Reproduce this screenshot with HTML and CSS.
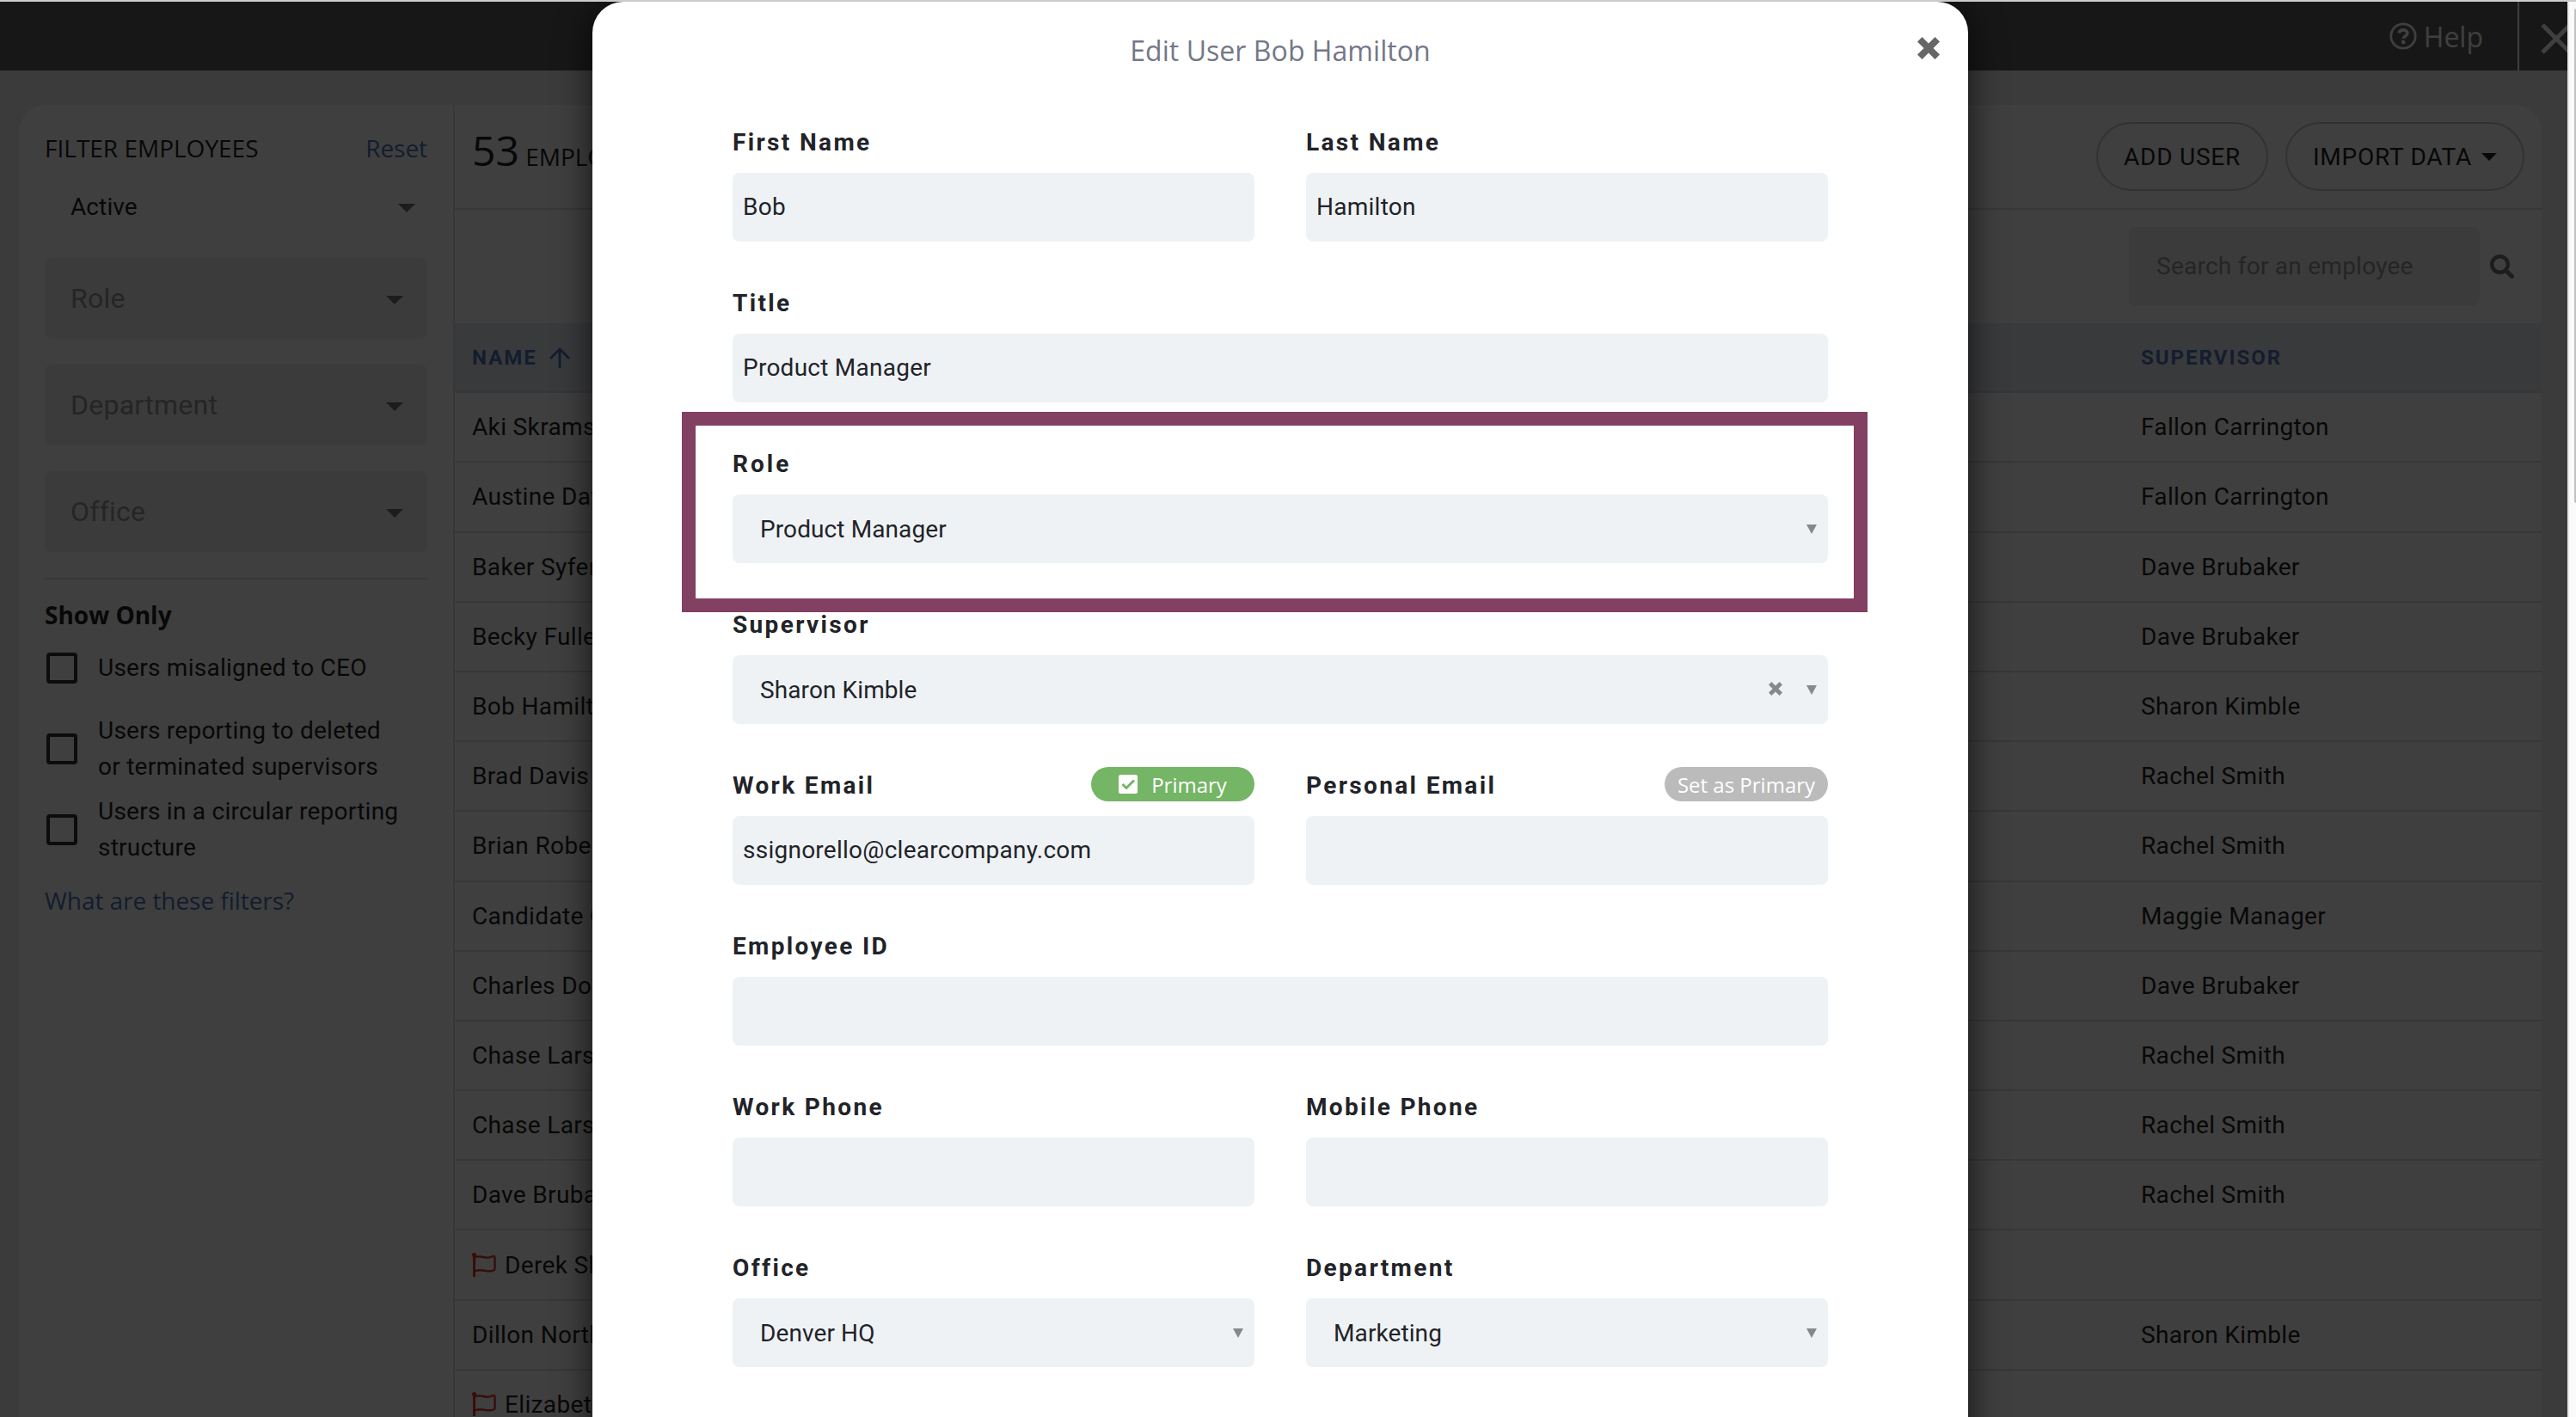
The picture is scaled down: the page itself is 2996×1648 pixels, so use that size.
FILE: index.html
```html
<!DOCTYPE html>
<html lang="en">
<head>
  <meta charset="UTF-8">
  <meta name="viewport" content="width=device-width, initial-scale=1.0">
  <link rel="stylesheet" href="styles.css">
  <title>Edit User</title>
</head>

<body>
  <div class="window">
    <div class="app">
      <header class="topbar">
        <a class="help">
          <svg width="32" height="32" viewBox="0 0 32 32" fill="none" stroke="currentColor">
            <circle cx="16" cy="16" r="14.2" stroke-width="2.8"/>
            <path d="M11 12.3c.8-2.3 2.6-3.4 5-3.4 2.9 0 4.9 1.6 4.9 3.9 0 3.2-4.6 3.3-4.6 6.2" stroke-width="3.6"/>
            <circle cx="16.2" cy="23" r="1.2" stroke-width="2.4"/>
          </svg>
          <span>Help</span>
        </a>
        <div class="topbar-close">
          <svg width="36" height="36" viewBox="0 0 36 36" stroke="currentColor" stroke-width="5">
            <path d="M2 2l32 32M34 2L2 34"/>
          </svg>
        </div>
      </header>

      <div class="card">
        <aside class="sidebar">
          <div class="filter-head">
            <span>FILTER EMPLOYEES</span>
            <a class="link">Reset</a>
          </div>
          <div class="status"><span>Active</span><i class="caret"></i></div>
          <div class="filter"><span>Role</span><i class="caret"></i></div>
          <div class="filter"><span>Department</span><i class="caret"></i></div>
          <div class="filter"><span>Office</span><i class="caret"></i></div>
          <hr>
          <h4>Show Only</h4>
          <label class="check"><i class="box"></i><span>Users misaligned to CEO</span></label>
          <label class="check"><i class="box"></i><span>Users reporting to deleted<br>or terminated supervisors</span></label>
          <label class="check"><i class="box"></i><span>Users in a circular reporting<br>structure</span></label>
          <a class="link what">What are these filters?</a>
        </aside>

        <main class="main">
          <div class="main-head">
            <h2><b>53</b> EMPLOYEES</h2>
            <div class="buttons">
              <button class="btn">ADD USER</button>
              <button class="btn">IMPORT DATA <i class="caret"></i></button>
            </div>
          </div>
          <div class="search-row">
            <div class="search">Search for an employee</div>
            <svg class="search-icon" width="28" height="28" viewBox="0 0 28 28" fill="none" stroke="currentColor" stroke-linecap="round">
              <circle cx="11.5" cy="11.5" r="9.3" stroke-width="4.4"/>
              <path d="M19 19l6.4 6.4" stroke-width="5"/>
            </svg>
          </div>
          <div class="row row-head">
            <span class="name">NAME
              <svg width="24" height="24" viewBox="0 0 24 24" fill="none" stroke="currentColor" stroke-width="2.8"><path d="M12 24V2M1 13L12 2l11 11"/></svg>
            </span>
            <span>SUPERVISOR</span>
          </div>
          <div id="rows"></div>
        </main>
      </div>

      <div class="backdrop"></div>

      <div class="modal">
        <div class="modal-head">
          <h3>Edit User Bob Hamilton</h3>
          <svg class="modal-close" width="26" height="26" viewBox="0 0 26 26"><path d="M5.5 0L13 7.5 20.500 0 26 5.500 18.500 13 26 20.500 20.500 26 13 18.500 5.500 26 0 20.500 7.500 13 0 5.500z"/></svg>
        </div>
        <form class="form">
          <div class="field"><label>First Name</label><div class="input">Bob</div></div>
          <div class="field"><label>Last Name</label><div class="input">Hamilton</div></div>
          <div class="field wide"><label>Title</label><div class="input">Product Manager</div></div>
          <div class="field wide role"><label>Role</label><div class="input select"><span>Product Manager</span><i class="arrow"></i></div></div>
          <div class="field wide"><label>Supervisor</label>
            <div class="input select"><span>Sharon Kimble</span>
              <svg class="clear" width="16" height="16" viewBox="0 0 26 26"><path d="M5.500 0L13 7.500 20.500 0 26 5.500 18.500 13 26 20.500 20.500 26 13 18.500 5.500 26 0 20.500 7.500 13 0 5.500z"/></svg>
              <i class="arrow"></i>
            </div>
          </div>
          <div class="field">
            <label>Work Email
              <span class="pill green">
                <svg width="22" height="22" viewBox="0 0 22 22"><rect width="22" height="22" rx="2.500" fill="#fff"/><path d="M4.500 11l4.500 4.500 9-9" fill="none" stroke="#74b566" stroke-width="3"/></svg>
                Primary</span>
            </label>
            <div class="input">ssignorello@clearcompany.com</div>
          </div>
          <div class="field"><label>Personal Email <span class="pill">Set as Primary</span></label><div class="input"></div></div>
          <div class="field wide"><label>Employee ID</label><div class="input"></div></div>
          <div class="field"><label>Work Phone</label><div class="input"></div></div>
          <div class="field"><label>Mobile Phone</label><div class="input"></div></div>
          <div class="field"><label>Office</label><div class="input select"><span>Denver HQ</span><i class="arrow"></i></div></div>
          <div class="field"><label>Department</label><div class="input select"><span>Marketing</span><i class="arrow"></i></div></div>
        </form>
        <div class="highlight"></div>
      </div>
    </div>
    <div class="scrollbar"><div class="thumb"></div></div>
  </div>

  <script>
    const employees = [
      ['Aki Skramstad', 'Fallon Carrington'],
      ['Austine Davis', 'Fallon Carrington'],
      ['Baker Syfert', 'Dave Brubaker'],
      ['Becky Fuller', 'Dave Brubaker'],
      ['Bob Hamilton', 'Sharon Kimble'],
      ['Brad Davis', 'Rachel Smith'],
      ['Brian Roberts', 'Rachel Smith'],
      ['Candidate C', 'Maggie Manager'],
      ['Charles Dodd', 'Dave Brubaker'],
      ['Chase Larson', 'Rachel Smith'],
      ['Chase Larson', 'Rachel Smith'],
      ['Dave Brubaker', 'Rachel Smith'],
      ['Derek Sh', '', true],
      ['Dillon North', 'Sharon Kimble'],
      ['Elizabeth', '', true]
    ];
    // red flag shown for users without a supervisor
    const flag = '<svg class="flag" width="28" height="28" viewBox="0 0 28 28" fill="none" stroke="currentColor" stroke-width="2.4"><path d="M2.500 2v26" stroke-width="3"/><circle cx="2.500" cy="2.500" r="1.300"/><path d="M3 5.500c8-4 12 3 20 -1q3.500-1.500 3.500 1v13q0 1.500-1.500 2c-8 3-13-3-22 1"/></svg>';
    const rows = document.getElementById('rows');

    employees.forEach(([name, supervisor, flagged]) => {
      const row = document.createElement('div');
      row.className = 'row';
      row.innerHTML = `<span class="name">${flagged ? flag : ''}${name}</span><span>${supervisor}</span>`;
      rows.appendChild(row);
    });
  </script>
</body>

</html>
```
FILE: styles.css
```css
* {
  box-sizing: border-box;
}

body {
  margin: 0;
  overflow: hidden;
  font-family: Roboto, sans-serif;
  font-size: 28px;
  letter-spacing: 0.25px;
  color: #222;
}

svg {
  display: block;
  flex: none;
}

.window {
  display: flex;
  height: 1648px;
  border-top: 2px solid #ccc;
}

.app {
  position: relative;
  display: flex;
  flex-direction: column;
  width: 2986px;
  overflow: hidden;
  background: #ececec;
}

.topbar {
  display: flex;
  flex: none;
  justify-content: flex-end;
  height: 80px;
  background: #5c5c5c;
  color: #fff;
}

.help {
  display: flex;
  align-items: center;
  gap: 8px;
  padding-right: 40px;
  font: 32px "Open Sans", sans-serif;
  letter-spacing: 0;
}

.topbar-close {
  display: flex;
  align-items: center;
  width: 58px;
  padding: 6px 0 0 25px;
  border-left: 2px solid #fff;
  overflow: hidden;
}

.card {
  display: flex;
  flex: none;
  height: 1700px;
  margin: 40px 30px 0 22px;
  background: #fff;
  border-radius: 32px;
  overflow: hidden;
}

/* sidebar */

.sidebar {
  flex: none;
  width: 507px;
  padding: 30px 30px 0;
  border-right: 2px solid #dcdcdc;
}

.filter-head {
  display: flex;
  justify-content: space-between;
  font-family: "Open Sans", sans-serif;
  line-height: 40px;
  letter-spacing: 0;
}

.link {
  font-family: "Open Sans", sans-serif;
  letter-spacing: -0.05px;
  color: #4f76b8;
}

.status,
.filter {
  display: flex;
  align-items: center;
  justify-content: space-between;
  padding: 0 28px 0 30px;
}

.status {
  height: 60px;
  margin: 18px 0 30px;
  padding-right: 14px;
  letter-spacing: 0.1px;
}

.filter {
  height: 94px;
  margin-bottom: 30px;
  border-radius: 8px;
  background: #eee;
  color: #959595;
  font-size: 32px;
}

.filter span {
  padding-bottom: 1px;
}

.caret {
  display: inline-block;
  border: 10px solid transparent;
  border-top-color: #707070;
  border-bottom: 0;
  margin-top: 3px;
}

hr {
  margin: 0 0 26px;
  border: 0;
  border-top: 2px solid #dcdcdc;
}

h4 {
  margin: 0;
  font: bold 28px/30px "Open Sans", sans-serif;
  letter-spacing: 0;
}

.check {
  display: flex;
  align-items: center;
  height: 94px;
  padding-left: 2px;
  line-height: 42px;
}

.box {
  width: 36px;
  height: 36px;
  margin-right: 24px;
  border: 4px solid #333;
  border-radius: 4px;
}

.what {
  display: block;
  margin-top: 15px;
  line-height: 40px;
}

/* employee list */

.main {
  flex: 1;
}

.main-head {
  display: flex;
  align-items: center;
  justify-content: space-between;
  height: 122px;
  padding: 0 20px;
  border-bottom: 2px solid #dcdcdc;
}

h2 {
  margin: 0;
  padding-bottom: 7px;
  font: 28px/60px "Open Sans", sans-serif;
  letter-spacing: 0;
}

h2 b {
  font-size: 48px;
  font-weight: normal;
}

.buttons {
  display: flex;
  gap: 20px;
}

.btn {
  display: flex;
  align-items: center;
  height: 80px;
  padding: 0 30px;
  border: 2px solid #c8c8c8;
  border-radius: 40px;
  background: none;
  color: #222;
  font: 28px Roboto, sans-serif;
  letter-spacing: 0.75px;
}

.btn .caret {
  margin: 1px 0 0 11px;
  border-width: 9px;
  border-top-color: #222;
  border-bottom: 0;
}

.search-row {
  display: flex;
  align-items: center;
  justify-content: flex-end;
  height: 132px;
  padding-right: 32px;
}

.search {
  width: 408px;
  padding-left: 32px;
  border-radius: 8px;
  background: #eee;
  color: #959595;
  line-height: 92px;
}

.search-icon {
  margin-left: 12px;
  color: #73767c;
}

.row {
  display: flex;
  align-items: center;
  height: 81.2px;
  padding-left: 20px;
  border-bottom: 2px solid #dcdcdc;
  letter-spacing: 0.35px;
}

.name {
  display: flex;
  align-items: center;
  width: 1941px;
}

.row-head {
  background: #e4ebf2;
  color: #4f76b8;
  font-size: 24px;
  font-weight: bold;
  letter-spacing: 2px;
}

.row-head svg {
  margin-left: 14px;
}

.flag {
  margin-right: 10px;
  color: #e0302a;
}

.backdrop {
  position: absolute;
  inset: 0;
  background: rgba(0, 0, 0, 0.752);
}

/* edit dialog */

.modal {
  position: absolute;
  top: 0;
  left: 689px;
  width: 1600px;
  height: 1800px;
  padding: 0 163px;
  border-radius: 36px;
  background: #fff;
  color: #222328;
  box-shadow: 0 4px 40px rgba(0, 0, 0, 0.7);
}

.modal-head {
  display: flex;
  align-items: center;
  justify-content: center;
  height: 139px;
  margin-right: -130px;
  padding-bottom: 26px;
}

h3 {
  flex: 1;
  margin: 0 0 0 26px;
  text-align: center;
  font: 32px "Open Sans", sans-serif;
  letter-spacing: 0.05px;
  color: #737888;
}

.modal-head h3 {
  padding-right: 130px;
}

.modal-close {
  margin-bottom: 5px;
  fill: #666;
}

.form {
  display: grid;
  grid-template-columns: 607px 607px;
  gap: 47px 60px;
}

.wide {
  grid-column: span 2;
}

.field label {
  display: flex;
  align-items: center;
  justify-content: space-between;
  height: 49px;
  margin-bottom: 11px;
  font-weight: bold;
  letter-spacing: 2.35px;
}

.role label {
  letter-spacing: 3px;
}

.input {
  height: 80px;
  padding: 0 12px;
  border-radius: 8px;
  background: #eef2f5;
  line-height: 80px;
}

.select {
  display: flex;
  align-items: center;
  padding: 2px 13px 0 32px;
  letter-spacing: 0.1px;
}

.select span {
  flex: 1;
}

.arrow {
  border: 6px solid transparent;
  border-top: 11px solid #888;
  border-bottom: 0;
  margin-bottom: 2px;
}

.clear {
  margin: 0 28px 5px 0;
  fill: #888;
}

.pill {
  display: flex;
  align-items: center;
  justify-content: center;
  width: 190px;
  height: 40px;
  margin-bottom: 3px;
  border-radius: 20px;
  background: #bbb;
  color: #fff;
  font: 24px "Open Sans", sans-serif;
  letter-spacing: 0;
}

.pill svg {
  margin-right: 16px;
}

.green {
  background: #74b566;
}

/* frame around the role field */
.highlight {
  position: absolute;
  top: 477px;
  left: 104px;
  width: 1379px;
  height: 233px;
  border: 16px solid #824062;
}

.scrollbar {
  display: flex;
  justify-content: flex-end;
  flex: 1;
  padding-top: 8px;
  border-left: 2px solid #e8e8e8;
  background: #fafafa;
}

.thumb {
  width: 2px;
  height: 575px;
  border-radius: 2px 0 0 2px;
  background: #c1c1c1;
}
```
